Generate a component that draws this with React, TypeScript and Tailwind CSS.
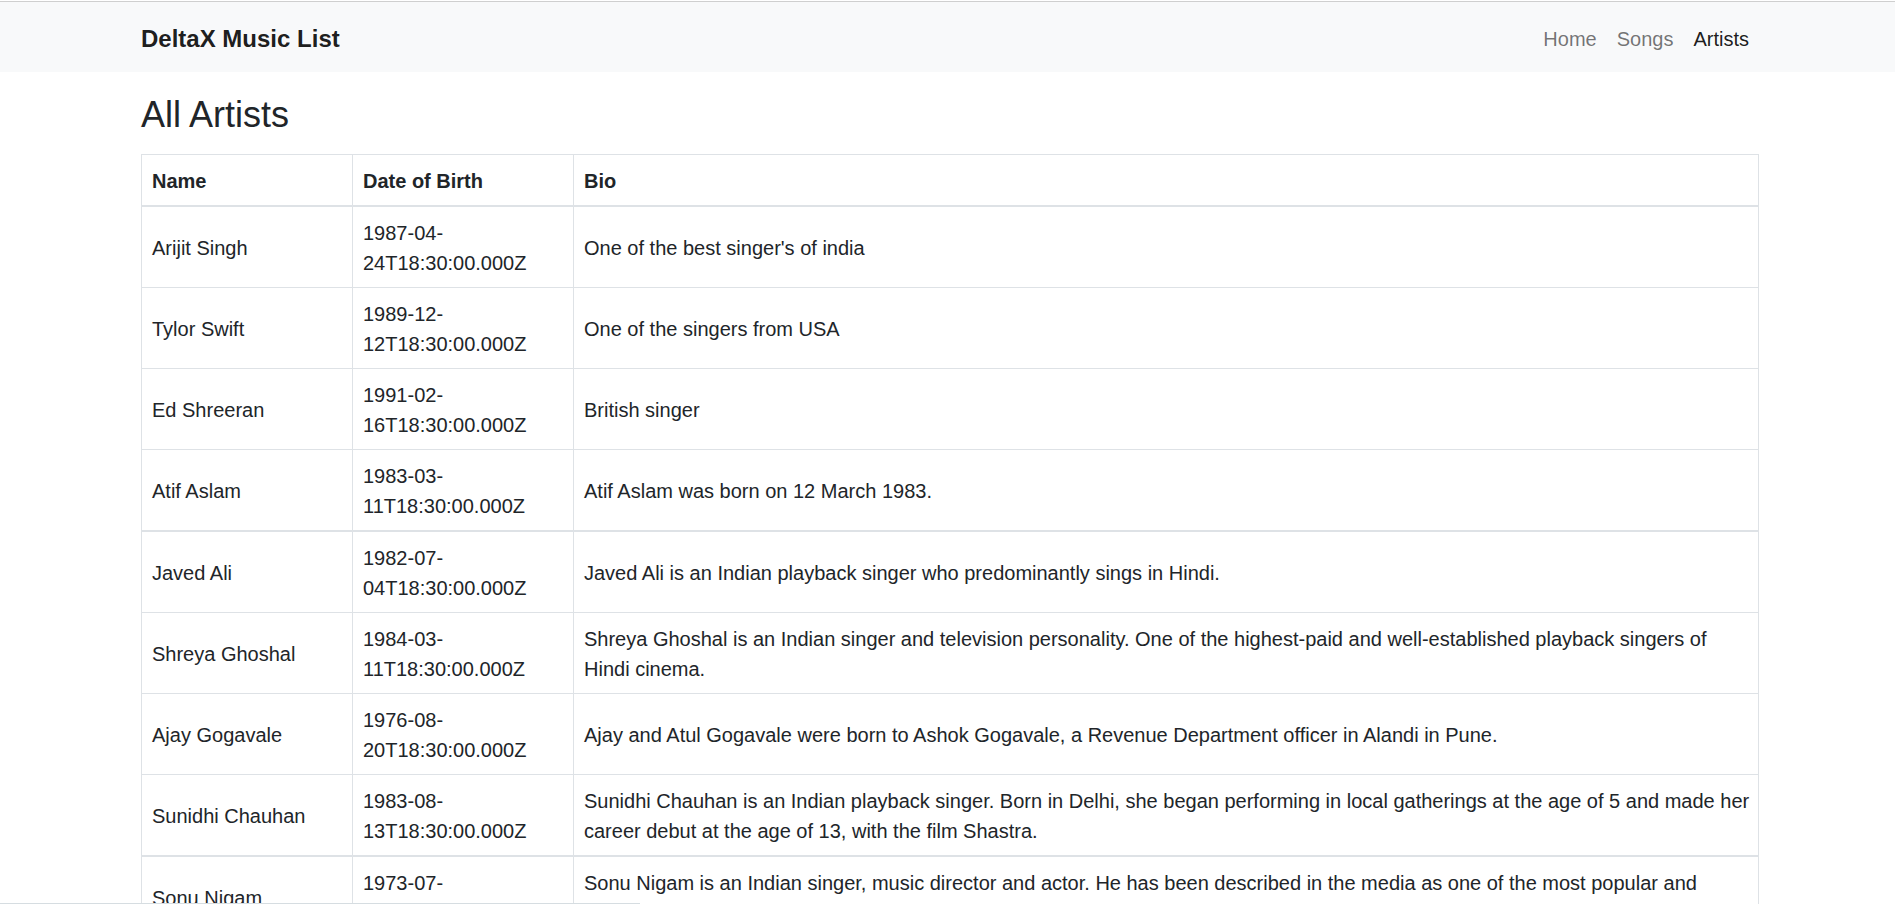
import React from "react";

type Artist = { name: string; dob: string; bio: string[]; thickBottom?: boolean };

const artists: Artist[] = [
  { name: "Arijit Singh", dob: "1987-04-24T18:30:00.000Z", bio: ["One of the best singer's of india"] },
  { name: "Tylor Swift", dob: "1989-12-12T18:30:00.000Z", bio: ["One of the singers from USA"] },
  { name: "Ed Shreeran", dob: "1991-02-16T18:30:00.000Z", bio: ["British singer"] },
  { name: "Atif Aslam", dob: "1983-03-11T18:30:00.000Z", bio: ["Atif Aslam was born on 12 March 1983."], thickBottom: true },
  { name: "Javed Ali", dob: "1982-07-04T18:30:00.000Z", bio: ["Javed Ali is an Indian playback singer who predominantly sings in Hindi."] },
  {
    name: "Shreya Ghoshal",
    dob: "1984-03-11T18:30:00.000Z",
    bio: [
      "Shreya Ghoshal is an Indian singer and television personality. One of the highest-paid and well-established playback singers of",
      "Hindi cinema.",
    ],
  },
  {
    name: "Ajay Gogavale",
    dob: "1976-08-20T18:30:00.000Z",
    bio: ["Ajay and Atul Gogavale were born to Ashok Gogavale, a Revenue Department officer in Alandi in Pune."],
  },
  {
    name: "Sunidhi Chauhan",
    dob: "1983-08-13T18:30:00.000Z",
    bio: [
      "Sunidhi Chauhan is an Indian playback singer. Born in Delhi, she began performing in local gatherings at the age of 5 and made her",
      "career debut at the age of 13, with the film Shastra.",
    ],
    thickBottom: true,
  },
  {
    name: "Sonu Nigam",
    dob: "1973-07-29T18:30:00.000Z",
    bio: [
      "Sonu Nigam is an Indian singer, music director and actor. He has been described in the media as one of the most popular and",
      "versatile singers of India.",
    ],
  },
];

export default function App() {
  return (
    <div className="min-h-screen bg-white font-['Liberation_Sans',Arial,sans-serif] text-[20px] leading-[1.5] text-[#212529]">
      <div className="h-px bg-white" />
      <div className="h-px bg-[#cfcfcf]" />
      <nav className="flex h-[70px] items-center bg-[#f8f9fa]">
        <div className="ml-[126px] flex w-[1648px] items-center justify-between px-[15px]">
          <span className="pb-[5px] pt-[8px] text-[24px] font-bold leading-[37.5px] text-black/90">DeltaX Music List</span>
          <ul className="flex items-center">
            <li>
              <a className="block px-[10px] pb-[9px] pt-[12px] text-black/55">Home</a>
            </li>
            <li>
              <a className="block px-[10px] pb-[9px] pt-[12px] text-black/55">Songs</a>
            </li>
            <li>
              <a className="block px-[10px] pb-[9px] pt-[12px] text-black/90">Artists</a>
            </li>
          </ul>
        </div>
      </nav>
      <main className="ml-[126px] w-[1648px] px-[15px]">
        <h3 className="mb-[18px] mt-[22px] text-[36px] font-medium leading-[42px]">All Artists</h3>
        <table className="w-full table-fixed border-separate border-spacing-0 border-l border-t border-[#dee2e6]">
          <colgroup>
            <col className="w-[211px]" />
            <col className="w-[221px]" />
            <col />
          </colgroup>
          <thead>
            <tr>
              {["Name", "Date of Birth", "Bio"].map((h) => (
                <th
                  key={h}
                  className="border-b-2 border-r border-[#dee2e6] px-[10px] pb-[9px] pt-[11px] text-left align-middle font-bold"
                >
                  {h}
                </th>
              ))}
            </tr>
          </thead>
          <tbody>
            {artists.map((a) => {
              const cell = a.thickBottom
                ? "border-b-2 border-r border-[#dee2e6] px-[10px] pb-[9px] pt-[11px] align-middle"
                : "border-b border-r border-[#dee2e6] px-[10px] pb-[9px] pt-[11px] align-middle";
              return (
                <tr key={a.name}>
                  <td className={cell}>{a.name}</td>
                  <td className={cell}>
                    {a.dob.slice(0, 8)}
                    <br />
                    {a.dob.slice(8)}
                  </td>
                  <td className={cell}>
                    {a.bio.map((line, i) => (
                      <span key={i} className="block whitespace-nowrap">
                        {line}
                      </span>
                    ))}
                  </td>
                </tr>
              );
            })}
          </tbody>
        </table>
      </main>
      <div className="fixed bottom-0 left-0 h-px w-[640px] bg-[#d6dde1]" />
    </div>
  );
}
